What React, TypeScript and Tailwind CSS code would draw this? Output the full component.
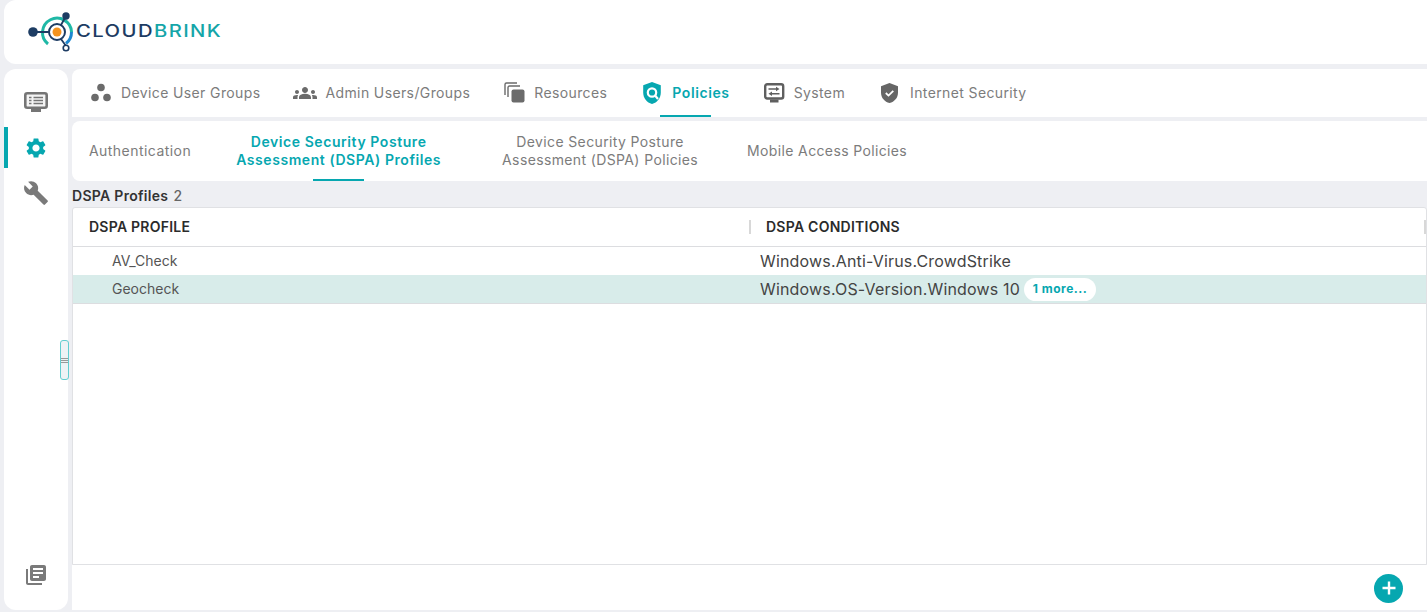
import React from 'react'

const Logo = () => (
  <svg width="48" height="44" viewBox="0 0 48 44" className="shrink-0">
    <path d="M20 34 A14.500 14.500 0 1 1 43.500 22" fill="none" stroke="#1fb8a6" strokeWidth="3" />
    <path d="M38 33.500 A14.500 14.500 0 0 0 43.500 22" fill="none" stroke="#1e88d0" strokeWidth="3" />
    <circle cx="29" cy="22" r="8" fill="#fff" stroke="#1d3c63" strokeWidth="2" />
    <circle cx="29" cy="22" r="4.500" fill="#f5931e" />
    <path d="M5 22 H21 M33 15 L38 6 M33 29 L38 36" stroke="#1d3c63" strokeWidth="1.800" fill="none" />
    <circle cx="5" cy="22" r="4.800" fill="#1d3c63" />
    <circle cx="38" cy="6" r="3.700" fill="#1d3c63" />
    <circle cx="38" cy="38" r="2.800" fill="#fff" stroke="#1d3c63" strokeWidth="1.600" />
  </svg>
)

const GroupsIcon = () => (
  <svg width="20" height="20" viewBox="0 0 20 20" fill="#6b6b6b">
    <circle cx="10" cy="4.500" r="3.800" />
    <circle cx="4" cy="14.500" r="3.800" />
    <circle cx="16" cy="14.500" r="3.800" />
  </svg>
)

const AdminsIcon = () => (
  <svg width="24" height="24" viewBox="0 0 24 24" fill="#6b6b6b">
    <path d="M12 12.750c1.630 0 3.070.39 4.240.9 1.080.48 1.760 1.560 1.760 2.730V18H6v-1.610c0-1.180.68-2.260 1.760-2.730 1.170-.52 2.610-.91 4.240-.91zM4 13c1.100 0 2-.9 2-2s-.9-2-2-2-2 .9-2 2 .9 2 2 2zm1.130 1.100C4.760 14.040 4.390 14 4 14c-.99 0-1.930.21-2.780.58C.48 14.900 0 15.620 0 16.430V18h4.500v-1.610c0-.83.23-1.610.63-2.290zM20 13c1.100 0 2-.9 2-2s-.9-2-2-2-2 .9-2 2 .9 2 2 2zm4 3.430c0-.81-.48-1.530-1.220-1.850-.85-.37-1.790-.58-2.780-.58-.39 0-.76.04-1.130.1.4.68.63 1.460.63 2.290V18H24v-1.570zM12 6c1.660 0 3 1.340 3 3s-1.340 3-3 3-3-1.340-3-3 1.340-3 3-3z" />
  </svg>
)

const ResourcesIcon = () => (
  <svg width="22" height="22" viewBox="0 0 22 22" fill="none" stroke="#6b6b6b" strokeWidth="1.400">
    <path d="M1 13V2.500A1.500 1.500 0 0 1 2.500 1H13" />
    <path d="M4 15V5.500A1.500 1.500 0 0 1 5.500 4H16" />
    <rect x="7.500" y="7.500" width="13" height="13" rx="2" fill="#6b6b6b" stroke="none" />
  </svg>
)

const PolicyIcon = () => (
  <svg width="20" height="24" viewBox="0 0 20 24">
    <path d="M10 1 L18.800 4.300 V11.500 C18.800 17.300 15.200 21.500 10 23 C4.800 21.500 1.200 17.300 1.200 11.500 V4.300 Z" fill="#06a7b0" />
    <circle cx="10" cy="11.500" r="4.200" fill="none" stroke="#fff" strokeWidth="2.200" />
    <path d="M13 14.500 L16 18" stroke="#fff" strokeWidth="2.200" />
  </svg>
)

const SystemIcon = () => (
  <svg width="22" height="20" viewBox="0 0 22 20">
    <rect x="1.200" y="1.200" width="18" height="14.300" rx="2" fill="none" stroke="#5f5f5f" strokeWidth="2.400" />
    <path d="M6 16.500 H14.500 V19.500 H6 Z" fill="#5f5f5f" />
    <path d="M4.500 6 H12 M8 10.800 H15.500" stroke="#5f5f5f" strokeWidth="1.500" />
    <path d="M12 3.800 L15.500 6 L12 8.200 Z M8 8.600 L4.500 10.800 L8 13 Z" fill="#5f5f5f" />
  </svg>
)

const ShieldIcon = () => (
  <svg width="19" height="22" viewBox="0 0 19 22">
    <path d="M9.500 1 L18 4.200 V10.500 C18 16 14.400 19.800 9.500 21 C4.600 19.800 1 16 1 10.500 V4.200 Z" fill="#666" />
    <path d="M5.800 11 L8.500 13.600 L13.300 8.800" fill="none" stroke="#fff" strokeWidth="1.800" />
  </svg>
)

const MonitorListIcon = () => (
  <svg width="24" height="20" viewBox="0 0 24 20">
    <rect x="1.300" y="1.300" width="21.400" height="14.400" rx="2" fill="#f4f4f4" stroke="#757575" strokeWidth="2.600" />
    <path d="M7 16.500 H17 V20 H7 Z" fill="#757575" />
    <path d="M9.500 5.500 H19 M9.500 8.500 H19 M9.500 11.500 H19 M5 5.500 H7.500 M5 8.500 H7.500 M5 11.500 H7.500" stroke="#757575" strokeWidth="1.700" />
  </svg>
)

const GearIcon = () => (
  <svg width="24" height="24" viewBox="0 0 24 24" fill="#06a7b0">
    <path d="M19.140 12.940c.04-.3.060-.61.060-.94 0-.32-.02-.64-.07-.94l2.030-1.580a.49.49 0 0 0 .12-.61l-1.920-3.320a.488.488 0 0 0-.59-.22l-2.390.96c-.5-.38-1.030-.7-1.620-.94l-.36-2.540a.484.484 0 0 0-.48-.41h-3.840c-.24 0-.43.17-.47.41l-.36 2.540c-.59.24-1.130.57-1.620.94l-2.390-.96c-.22-.08-.47 0-.59.22L2.740 8.870c-.12.21-.08.47.12.61l2.030 1.580c-.05.3-.09.63-.09.94s.02.64.07.94l-2.030 1.580a.49.49 0 0 0-.12.61l1.920 3.320c.12.22.37.29.59.22l2.390-.96c.5.38 1.030.7 1.620.94l.36 2.540c.05.24.24.41.48.41h3.840c.24 0 .44-.17.47-.41l.36-2.540c.59-.24 1.130-.56 1.620-.94l2.390.96c.22.08.47 0 .59-.22l1.920-3.320c.12-.22.07-.47-.12-.61l-2.010-1.580zM12 15.600c-1.980 0-3.600-1.620-3.600-3.600s1.620-3.600 3.600-3.600 3.600 1.620 3.600 3.600-1.620 3.600-3.600 3.600z" />
  </svg>
)

const WrenchIcon = () => (
  <svg width="26" height="26" viewBox="0 0 24 24" fill="#7a7a7a">
    <path d="M22.700 19l-9.100-9.100c.9-2.300.4-5-1.500-6.900-2-2-5-2.400-7.400-1.300L9 6 6 9 1.600 4.700C.4 7.100.9 10.100 2.900 12.100c1.900 1.900 4.600 2.400 6.900 1.500l9.100 9.100c.4.400 1 .4 1.400 0l2.300-2.300c.5-.4.500-1.100.1-1.400z" />
  </svg>
)

const LibraryIcon = () => (
  <svg width="24" height="24" viewBox="0 0 24 24" fill="#7a7a7a">
    <path d="M4 6H2v14c0 1.100.9 2 2 2h14v-2H4V6zm16-4H8c-1.100 0-2 .9-2 2v12c0 1.100.9 2 2 2h12c1.100 0 2-.9 2-2V4c0-1.100-.9-2-2-2zm-1 9H9V9h10v2zm-4 4H9v-2h6v2zm4-8H9V5h10v2z" />
  </svg>
)

const topTabs = [
  { label: 'Device User Groups', icon: <GroupsIcon />, gap: 'gap-[10px]', ml: 'ml-[19px]' },
  { label: 'Admin Users/Groups', icon: <AdminsIcon />, gap: 'gap-2', ml: 'ml-[33px]' },
  { label: 'Resources', icon: <ResourcesIcon />, gap: 'gap-2', ml: 'ml-[34px]' },
  { label: 'Policies', icon: <PolicyIcon />, gap: 'gap-[10px]', ml: 'ml-[35px]', active: true },
  { label: 'System', icon: <SystemIcon />, gap: 'gap-2', ml: 'ml-[34px]' },
  { label: 'Internet Security', icon: <ShieldIcon />, gap: 'gap-[11px]', ml: 'ml-[35px]' },
]

export default function App() {
  return (
    <div className="relative h-[612px] w-[1427px] overflow-hidden bg-[#eeeff3] font-['Inter',sans-serif]">
      {/* Header */}
      <div className="ml-1 flex h-[64px] items-center rounded-l-xl bg-white pl-[24px]">
        <Logo />
        <span className="origin-left scale-x-[1.19] text-[17px] font-medium tracking-[1.2px] text-[#1d3c63]">
          CLOUD<span className="text-[#14a5a8]">BRINK</span>
        </span>
      </div>

      <div className="mt-[5px] flex h-[541px] gap-1">
        {/* Sidebar */}
        <aside className="ml-1 flex w-[64px] flex-col items-center rounded-xl bg-white">
          <div className="mt-[23px]"><MonitorListIcon /></div>
          <div className="relative mt-[15px] flex h-[41px] w-full items-center justify-center">
            <span className="absolute left-0 top-0 h-[41px] w-1 bg-[#06a7b0]" />
            <GearIcon />
          </div>
          <div className="mt-[12px] -ml-[1px]"><WrenchIcon /></div>
          <div className="mt-auto mb-[23px]"><LibraryIcon /></div>
        </aside>

        {/* Main */}
        <main className="flex min-w-0 flex-1 flex-col">
          <nav className="flex h-[48px] items-center rounded-tl-lg bg-white">
            {topTabs.map((t) => (
              <div key={t.label} className={`relative flex h-full items-center pb-px ${t.gap} ${t.ml}`}>
                {t.icon}
                <span className={`text-sm ${t.active ? 'font-semibold tracking-[0.6px] text-[#06a7b0]' : 'tracking-[0.38px] text-[#7c7c7c]'}`}>
                  {t.label}
                </span>
                {t.active && <span className="absolute bottom-0 right-[19px] h-[2px] w-[51px] bg-[#06a7b0]" />}
              </div>
            ))}
          </nav>

          <nav className="mt-1 flex h-[60px] items-center rounded-l-lg bg-white text-center text-sm leading-[18px]">
            <span className="ml-[17px] tracking-[0.45px] text-[#7c7c7c]">Authentication</span>
            <div className="relative ml-[45px] flex h-full items-center">
              <span className="font-semibold tracking-[0.57px] text-[#06a7b0]">
                Device Security Posture
                <br />
                Assessment (DSPA) Profiles
              </span>
              <span className="absolute bottom-0 left-[77px] h-[2px] w-[51px] bg-[#06a7b0]" />
            </div>
            <span className="ml-[61px] tracking-[0.37px] text-[#7c7c7c]">
              Device Security Posture
              <br />
              Assessment (DSPA) Policies
            </span>
            <span className="ml-[49px] tracking-[0.36px] text-[#7c7c7c]">Mobile Access Policies</span>
          </nav>

          <div className="mt-[5px] flex h-[20px] items-center gap-[5px] text-sm">
            <span className="font-semibold tracking-[0.3px] text-[#333]">DSPA Profiles</span>
            <span className="font-medium text-[#666]">2</span>
          </div>

          {/* Table */}
          <div className="mt-px flex h-[358px] flex-col rounded-t-[3px] border border-[#e0e1e4] bg-white">
            <div className="flex h-[39px] shrink-0 items-center border-b border-[#dcdde0] pb-px text-sm font-semibold tracking-[0.25px] text-[#2b2b2b]">
              <div className="w-[676px] pl-4">DSPA PROFILE</div>
              <div className="h-[14px] w-[2px] bg-[#d8d8d8]" />
              <div className="flex-1 pl-[15px]">DSPA CONDITIONS</div>
              <div className="h-[14px] w-[2px] bg-[#d8d8d8]" />
            </div>
            <div className="flex h-[28px] shrink-0 items-center">
              <div className="w-[687px] pl-[39px] text-sm text-[#555]">AV_Check</div>
              <div className="text-base tracking-[0.17px] text-[#444]">Windows.Anti-Virus.CrowdStrike</div>
            </div>
            <div className="flex h-[29px] shrink-0 items-center border-b border-[#dcdde0] bg-[#d8ecea]">
              <div className="w-[687px] pl-[39px] text-sm text-[#555]">Geocheck</div>
              <div className="text-base tracking-[0.17px] text-[#444]">Windows.OS-Version.Windows 10</div>
              <span className="ml-[4px] flex h-[23px] w-[72px] items-center justify-center rounded-full bg-white text-xs font-bold tracking-[0.5px] text-[#06a7b0]">
                1 more...
              </span>
            </div>
          </div>

          {/* Footer with add button */}
          <div className="flex h-[45px] items-center justify-end bg-white pr-[24px] pt-[1px]">
            <button className="flex h-[29px] w-[29px] items-center justify-center rounded-full bg-[#06a7b0]">
              <svg width="16" height="16" viewBox="0 0 16 16">
                <path d="M8 1.500 V14.500 M1.500 8 H14.500" stroke="#fff" strokeWidth="2.400" />
              </svg>
            </button>
          </div>
        </main>
      </div>

      {/* Sidebar resize handle */}
      <div className="absolute left-[60px] top-[340px] flex h-[40px] w-[9px] flex-col items-stretch justify-center gap-px rounded-[3px] border border-[#62cdd0] bg-[#eef2f5]">
        <div className="h-px bg-[#999]" />
        <div className="h-px bg-[#999]" />
        <div className="h-px bg-[#999]" />
      </div>
    </div>
  )
}
